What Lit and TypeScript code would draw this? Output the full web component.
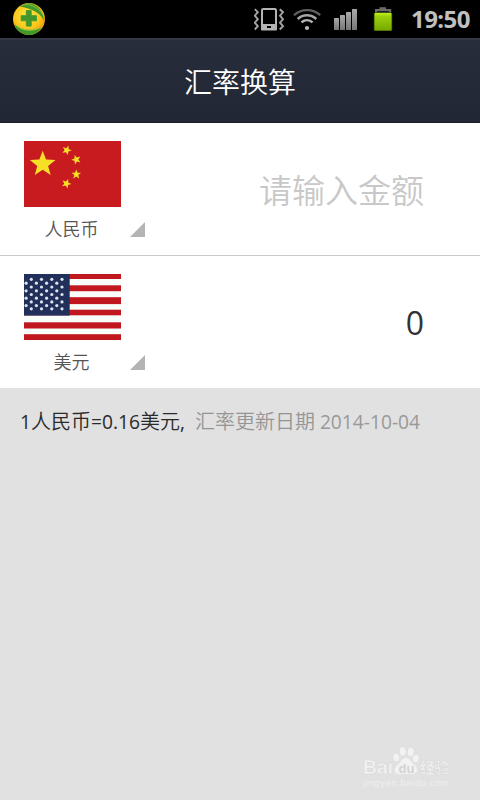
import { LitElement, html, svg, css } from "lit";
import { customElement } from "lit/decorators.js";

function star(cx: number, cy: number, r: number, turn = 0): string {
  const pts: string[] = [];
  for (let i = 0; i < 10; i++) {
    const radius = i % 2 ? r * 0.42 : r;
    const a = ((i * 36 - 90 + turn) * Math.PI) / 180;
    pts.push(`${(cx + radius * Math.cos(a)).toFixed(2)},${(cy + radius * Math.sin(a)).toFixed(2)}`);
  }
  return pts.join(" ");
}

const chinaStars: [number, number, number, number][] = [
  [18.7, 23.2, 13.5, 0],
  [42.7, 9.2, 5, 22],
  [52.3, 18.6, 5, -20],
  [52.3, 33.4, 5, 0],
  [42.4, 42.6, 5, 22],
];

const usStripes: [number, number][] = [
  [0, 5], [11.3, 5.9], [23.2, 6.9], [35.7, 5.6], [48.3, 6.2], [60.2, 5.8],
];

const usStarRows = [5.3, 9.2, 13, 16.8, 20.5, 24.2, 27.9, 31.6, 34.8];

@customElement("status-bar")
export class StatusBar extends LitElement {
  static styles = css`
    :host {
      display: flex;
      align-items: center;
      height: 38px;
      background: #000;
      box-sizing: border-box;
      padding-left: 12px;
    }
    svg { display: block; flex: none; }
    .icons { margin-left: 208px; }
    .time {
      margin-left: 10px;
      color: #c0c0c0;
      font: bold 24px/38px "Noto Sans", "Open Sans", sans-serif;
      letter-spacing: -0.55px;
      white-space: nowrap;
    }
  `;
  render() {
    return html`
      <svg width="34" height="38" viewBox="12 0 34 38">
        <defs>
          <radialGradient id="ball" cx="0.45" cy="0.4" r="0.6">
            <stop offset="0" stop-color="#ffe748" />
            <stop offset="0.65" stop-color="#fdc81b" />
            <stop offset="1" stop-color="#e89c0a" />
          </radialGradient>
          <clipPath id="round"><circle cx="29" cy="19" r="16" /></clipPath>
        </defs>
        <circle cx="29" cy="19" r="16" fill="url(#ball)" />
        <g clip-path="url(#round)">
          <path d="M20 6.5C24 1 42 0 44.5 22C41.5 13.5 33 9 20 6.5Z" fill="#3f9a27" />
          <path d="M22 5.2C30 3 39 7.5 43 15" fill="none" stroke="#8abb45" stroke-width="1" />
          <path d="M15 24C19 29 31 32.5 41.5 27C35 40 17 40 15 24Z" fill="#3f9a27" />
          <path d="M15.5 24.5C20 30 31 32.5 40.5 27.5" fill="none" stroke="#a9cf4e" stroke-width="1" />
        </g>
        <path d="M26.3 10.6h4.9v5.1h5.3v5.1h-5.3v5.3h-4.9v-5.3h-5.1v-5.1h5.1z" fill="#41962c" stroke="#4a9d2a" stroke-width="1" stroke-linejoin="round" />
      </svg>
      <svg class="icons" width="147" height="38" viewBox="254 0 147 38">
        <defs>
          <linearGradient id="cell" x1="0" y1="0" x2="0" y2="1">
            <stop offset="0" stop-color="#c3f01d" />
            <stop offset="0.2" stop-color="#9bd00e" />
            <stop offset="1" stop-color="#77a800" />
          </linearGradient>
          <linearGradient id="bars" x1="0" y1="0" x2="0" y2="1">
            <stop offset="0" stop-color="#aaa" />
            <stop offset="1" stop-color="#777" />
          </linearGradient>
        </defs>
        <rect x="262" y="9" width="14" height="20" rx="1.2" fill="none" stroke="#b4b4b4" stroke-width="2" />
        <path d="M261 24h16v5.5q0 1-1 1h-14q-1 0-1-1zM267 26v3h4v-3z" fill="#b4b4b4" fill-rule="evenodd" />
        <g fill="none" stroke="#a4a4a4" stroke-width="1.9">
          <path d="M254.8 9.2l3 3-3 3.5 3 3.5-3 3.5 3 3.5-3 3.3" />
          <path d="M279.7 9.2l3.3 3-3 3.5 3 3.5-3 3.5 3 3.5-3.3 3.3" />
        </g>
        <g fill="none">
          <path d="M294 15.2C301 8.3 313 8.3 320.2 15.2" stroke="#606060" stroke-width="2.3" />
          <path d="M297.7 19C303 14 311 14 316.3 19" stroke="#a5a5a5" stroke-width="2.5" />
          <path d="M301.5 22.4C304.8 19.5 309.4 19.5 312.6 22.4" stroke="#b4b4b4" stroke-width="2.5" />
        </g>
        <circle cx="307" cy="28" r="2.1" fill="#b8b8b8" />
        <g fill="url(#bars)">
          <rect x="334" y="18" width="5" height="12" rx=".5" />
          <rect x="340" y="15" width="5" height="15" rx=".5" />
          <rect x="346" y="12" width="5" height="18" rx=".5" />
          <rect x="352" y="9" width="5" height="21" rx=".5" />
        </g>
        <path d="M375 9h4.5V7.3h6.5V9h5.2v3.8h-16.2z" fill="#6c6c6c" />
        <path d="M377 11h12v1.6h-12z" fill="#222" />
        <rect x="373.8" y="12.4" width="18.4" height="18.6" rx="1.6" fill="#446800" />
        <rect x="374.6" y="13" width="16.8" height="17.2" rx="1" fill="url(#cell)" />
      </svg>
      <span class="time">19:50</span>
    `;
  }
}

@customElement("flag-icon")
export class FlagIcon extends LitElement {
  static properties = { country: { type: String } };
  declare country: string;
  static styles = css`
    :host, svg { display: block; }
  `;
  render() {
    return this.country === "cn"
      ? html`<svg width="97" height="66" viewBox="0 0 97 66">
          <rect width="97" height="66" fill="#c81b1f" />
          ${chinaStars.map(([x, y, r, t]) => svg`<polygon points=${star(x, y, r, t)} fill="#f5e026" />`)}
        </svg>`
      : html`<svg width="97" height="66" viewBox="0 0 97 66">
          <rect width="97" height="66" fill="#f9fdfa" />
          ${usStripes.map(([y, h]) => svg`<rect y=${y} width="97" height=${h} fill="#c1181f" />`)}
          <rect width="45.7" height="41.6" fill="#212f5b" />
          ${usStarRows.map((y, row) =>
            (row % 2 ? [2.1, 12.4, 22.6, 32.8] : [7.3, 17.5, 27.8, 38]).map(
              (x) => svg`<circle cx=${x} cy=${y} r="1.6" fill="#dfe3ee" />`
            )
          )}
        </svg>`;
  }
}

@customElement("currency-row")
export class CurrencyRow extends LitElement {
  static properties = {
    country: { type: String },
    name: { type: String },
    amount: { type: String },
    hint: { type: String },
  };
  declare country: string;
  declare name: string;
  declare amount: string;
  declare hint: string;
  static styles = css`
    :host {
      display: flex;
      justify-content: space-between;
      box-sizing: border-box;
      height: 132px;
      background: #fff;
      padding: 18px 56px 0 24px;
    }
    .picker {
      display: grid;
      grid-template-columns: 97px 15px;
      column-gap: 9px;
      grid-template-rows: 66px 30px;
      row-gap: 4px;
      height: 100px;
    }
    .name {
      grid-row: 2;
      text-align: center;
      font: 350 18px/34px "Noto Sans CJK SC", sans-serif;
      color: #555;
      padding-right: 2px;
    }
    .corner {
      grid-row: 2;
      grid-column: 2;
      align-self: end;
      width: 15px;
      height: 15px;
      margin-bottom: 4px;
      background: #b4b4b4;
      clip-path: polygon(100% 0, 100% 100%, 0 100%);
    }
    .value {
      font: 32px/66px "Open Sans", "Noto Sans", sans-serif;
      color: #333;
      margin-top: 16px;
      white-space: nowrap;
    }
    .value.hint {
      font: 350 33px/66px "Noto Sans CJK SC", sans-serif;
      margin-top: 15px;
      color: #c8c8c8;
    }
  `;
  render() {
    return html`
      <div class="picker">
        <flag-icon country=${this.country}></flag-icon>
        <span class="name">${this.name}</span>
        <span class="corner"></span>
      </div>
      ${this.amount
        ? html`<div class="value">${this.amount}</div>`
        : html`<div class="value hint">${this.hint}</div>`}
    `;
  }
}

@customElement("site-mark")
export class SiteMark extends LitElement {
  static styles = css`
    :host, svg { display: block; }
    .brand { font: bold 20px "Liberation Sans", sans-serif; }
    .cjk { font: bold 15px "Noto Sans CJK SC", sans-serif; }
    .du { font: bold 13px "Liberation Sans", sans-serif; }
    .url { font: 9.5px "Liberation Sans", sans-serif; }
  `;
  render() {
    return html`<svg width="96" height="46" viewBox="0 0 96 46">
      <g fill="#f2f2f2" stroke="#d6d6d6" stroke-width=".4">
        <text class="brand" x="3" y="27.5" textLength="30" lengthAdjust="spacingAndGlyphs">Bai</text>
        <ellipse cx="36.3" cy="11.5" rx="3.2" ry="4.2" transform="rotate(-12 36.3 11.5)" />
        <ellipse cx="42.7" cy="5.3" rx="3.4" ry="4.6" />
        <ellipse cx="50.7" cy="6" rx="3.4" ry="4.6" transform="rotate(8 50.7 6)" />
        <ellipse cx="55.8" cy="12.5" rx="3.2" ry="4.2" transform="rotate(15 55.8 12.5)" />
        <path d="M46 11.5C50 11.5 51 16 54.5 18.5C60 23 57 29 51.5 28.5C48 28 44 28 40.5 28.5C34 29 32 23 37.5 18.5C41 16 42 11.5 46 11.5Z" />
        <text class="cjk" x="60" y="26.5" textLength="29">经验</text>
      </g>
      <text class="url" x="3" y="39.5" textLength="86" fill="#efefef">jingyan.baidu.com</text>
      <text class="du" x="38.5" y="26.5" fill="#d2d2d2">du</text>
    </svg>`;
  }
}

@customElement("app-root")
export class AppRoot extends LitElement {
  static styles = css`
    :host {
      display: flex;
      flex-direction: column;
      width: 480px;
      height: 800px;
      overflow: hidden;
      background: #e1e1e1;
      font-family: "Noto Sans CJK SC", sans-serif;
    }
    .title {
      box-sizing: border-box;
      height: 85px;
      border-top: 2px solid #333744;
      border-bottom: 1px solid #181c27;
      background: linear-gradient(#272d3b, #212735);
      color: #fff;
      font-size: 28px;
      font-weight: 350;
      line-height: 82px;
      text-align: center;
    }
    .rows { display: grid; row-gap: 1px; background: #c9c9c9; }
    .rate {
      display: flex;
      align-items: baseline;
      padding: 16px 20px 18px;
      font-size: 20px;
      font-weight: 350;
      line-height: 34px;
      color: #2a2a2a;
      white-space: nowrap;
    }
    .num {
      font-family: "Open Sans", "Noto Sans", sans-serif;
      font-size: 19.2px;
      font-weight: 400;
      line-height: 1;
    }
    .updated { color: #959595; margin-left: 10px; }
    .updated .num { color: #999; margin-left: 5px; }
    .mark { margin: auto 24px 8px auto; }
  `;
  render() {
    return html`
      <status-bar></status-bar>
      <header class="title">汇率换算</header>
      <main class="rows">
        <currency-row country="cn" name="人民币" hint="请输入金额"></currency-row>
        <currency-row country="us" name="美元" amount="0"></currency-row>
      </main>
      <div class="rate">
        <span><span class="num">1</span>人民币<span class="num">=0.16</span>美元<span class="num">,</span></span>
        <span class="updated">汇率更新日期<span class="num">2014-10-04</span></span>
      </div>
      <site-mark class="mark"></site-mark>
    `;
  }
}
